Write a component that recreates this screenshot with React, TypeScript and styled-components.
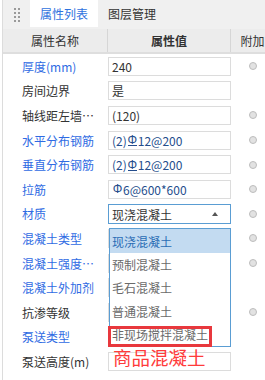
import React from "react";
import styled, { createGlobalStyle } from "styled-components";

const GlobalStyle = createGlobalStyle`
  body {
    margin: 0;
    background: #fff;
    overflow: hidden;
    font-family: "Noto Sans CJK SC", "Noto Sans", sans-serif;
    font-size: 12px;
    color: #333;
  }
`;

const Frame = styled.div`
  width: 271px;
  height: 380px;
  margin-left: 2px;
  border-left: 1px solid #dcdcdc;
  overflow: hidden;
`;

const TopBar = styled.div`
  display: flex;
  height: 29px;
  background: #f0f0f0;
  margin-left: -3px;
  padding-left: 3px;
`;

const Grip = styled.div`
  width: 27px;
  display: flex;
  align-items: center;
  justify-content: center;
`;

const Dots = styled.div`
  display: grid;
  grid-template-columns: 2px 2px;
  gap: 2px;
  span {
    width: 2px;
    height: 2px;
    background: #9a9a9a;
  }
`;

const Tab = styled.div<{ $active?: boolean }>`
  height: 27px;
  padding: 0 10px;
  display: flex;
  align-items: center;
  background: ${(p) => (p.$active ? "#fff" : "transparent")};
  color: ${(p) => (p.$active ? "#2f72de" : "#333")};
`;

const Header = styled.div`
  display: grid;
  grid-template-columns: 105px 123px 43px;
  height: 23px;
  background: #ececec;
  border-bottom: 2px solid #dedede;
`;

const HeadCell = styled.div<{ $divider?: boolean; $strong?: boolean }>`
  display: flex;
  align-items: center;
  justify-content: center;
  white-space: nowrap;
  border-right: ${(p) => (p.$divider ? "1px solid #d6d6d6" : "none")};
  font-weight: ${(p) => (p.$strong ? 600 : 400)};
  color: #333;
`;

const Row = styled.div`
  display: grid;
  grid-template-columns: 105px 123px 43px;
  align-items: center;
  height: 24.6px;
`;

const Label = styled.div<{ $blue?: boolean }>`
  padding-left: 19px;
  padding-right: 3px;
  white-space: nowrap;
  overflow: hidden;
  text-overflow: ellipsis;
  color: ${(p) => (p.$blue ? "#2f6be3" : "#333")};
`;

const ValueBox = styled.div<{ $rebar?: boolean }>`
  height: 19px;
  box-sizing: border-box;
  border: 1px solid #dcdcdc;
  padding-left: 3px;
  display: flex;
  align-items: center;
  white-space: nowrap;
  color: ${(p) => (p.$rebar ? "#244d8c" : "#333")};
`;

const SelectWrap = styled.div`
  position: relative;
`;

const SelectBox = styled.div`
  height: 20px;
  box-sizing: border-box;
  border: 1px solid #5a9dd3;
  padding-left: 3px;
  padding-right: 12px;
  display: flex;
  align-items: center;
  justify-content: space-between;
  color: #333;
  background: #fff;
  margin-top: 1px;
`;

const Caret = styled.span`
  width: 0;
  height: 0;
  border-left: 3px solid transparent;
  border-right: 3px solid transparent;
  border-bottom: 4px solid #555;
`;

const DropList = styled.div`
  position: absolute;
  left: 1px;
  top: calc(100% + 4px);
  width: 122px;
  box-sizing: border-box;
  border: 1px solid #5a9dd3;
  background: #fff;
  z-index: 5;
`;

const Option = styled.div<{ $selected?: boolean; $marked?: boolean }>`
  position: relative;
  height: 23.4px;
  display: flex;
  align-items: center;
  padding-left: 2px;
  white-space: nowrap;
  background: ${(p) => (p.$selected ? "#c3dbf1" : "#fff")};
  color: ${(p) => (p.$selected ? "#2a6db5" : "#6a6a6a")};
  &::after {
    content: "";
    display: ${(p) => (p.$marked ? "block" : "none")};
    position: absolute;
    left: -2px;
    top: 3px;
    width: 104px;
    bottom: -1px;
    border: 3px solid #e8383d;
    box-sizing: border-box;
  }
`;

const Note = styled.div`
  position: absolute;
  left: 3px;
  top: calc(100% + 1px);
  font-size: 18.5px;
  line-height: 21px;
  color: #ff3b3b;
  white-space: nowrap;
`;

const RadioCell = styled.div`
  display: flex;
  justify-content: center;
`;

const Radio = styled.span`
  width: 8px;
  height: 8px;
  box-sizing: border-box;
  border-radius: 50%;
  background: #e2e2e2;
  border: 1px solid #bdbdbd;
`;

const Rebar = styled.span<{ $grade?: number }>`
  position: relative;
  display: inline-block;
  width: 11px;
  text-align: center;
  font-family: "Liberation Sans", sans-serif;
  &::after {
    content: "";
    display: ${(p) => (p.$grade === 3 ? "block" : "none")};
    position: absolute;
    left: 1px;
    right: 1px;
    bottom: 1px;
    height: 1px;
    background: currentColor;
  }
`;

type Item = {
  label: string;
  blue?: boolean;
  value?: React.ReactNode;
  rebar?: boolean;
  radio?: boolean;
  select?: boolean;
};

const items: Item[] = [
  { label: "厚度(mm)", blue: true, value: "240", radio: true },
  { label: "房间边界", value: "是" },
  { label: "轴线距左墙皮距离", value: "(120)", radio: true },
  {
    label: "水平分布钢筋",
    blue: true,
    rebar: true,
    value: (
      <>
        (2)<Rebar $grade={3}>Φ</Rebar>12@200
      </>
    ),
    radio: true,
  },
  {
    label: "垂直分布钢筋",
    blue: true,
    rebar: true,
    value: (
      <>
        (2)<Rebar $grade={3}>Φ</Rebar>12@200
      </>
    ),
    radio: true,
  },
  {
    label: "拉筋",
    blue: true,
    rebar: true,
    value: (
      <>
        <Rebar>Φ</Rebar>6@600*600
      </>
    ),
    radio: true,
  },
  { label: "材质", blue: true, select: true, radio: true },
  { label: "混凝土类型", blue: true, value: "", radio: true },
  { label: "混凝土强度等级", blue: true, value: "", radio: true },
  { label: "混凝土外加剂", blue: true, value: "" },
  { label: "抗渗等级", value: "", radio: true },
  { label: "泵送类型", blue: true, value: "" },
  { label: "泵送高度(m)", value: "" },
];

const options = ["现浇混凝土", "预制混凝土", "毛石混凝土", "普通混凝土", "非现场搅拌混凝土"];

export default function App() {
  return (
    <>
      <GlobalStyle />
      <Frame>
        <TopBar>
          <Grip>
            <Dots>
              {Array.from({ length: 8 }).map((_, i) => (
                <span key={i} />
              ))}
            </Dots>
          </Grip>
          <Tab $active>属性列表</Tab>
          <Tab>图层管理</Tab>
        </TopBar>
        <Header>
          <HeadCell $divider>属性名称</HeadCell>
          <HeadCell $divider $strong>
            属性值
          </HeadCell>
          <HeadCell>附加</HeadCell>
        </Header>
        {items.map((it) => (
          <Row key={it.label}>
            <Label $blue={it.blue}>{it.label}</Label>
            {it.select ? (
              <SelectWrap>
                <SelectBox>
                  现浇混凝土
                  <Caret />
                </SelectBox>
                <DropList>
                  {options.map((o, i) => (
                    <Option key={o} $selected={i === 0} $marked={i === options.length - 1}>
                      {o}
                    </Option>
                  ))}
                  <Note>商品混凝土</Note>
                </DropList>
              </SelectWrap>
            ) : (
              <ValueBox $rebar={it.rebar}>{it.value}</ValueBox>
            )}
            <RadioCell>{it.radio && <Radio />}</RadioCell>
          </Row>
        ))}
      </Frame>
    </>
  );
}
